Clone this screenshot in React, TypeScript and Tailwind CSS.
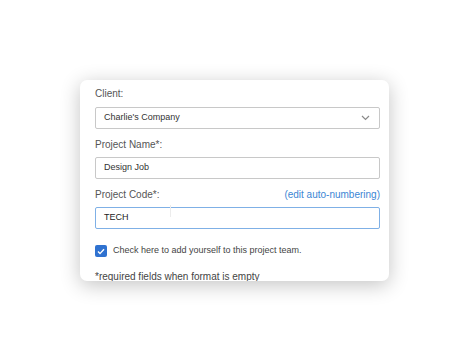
import React from "react";

const Label = ({ children }: { children: React.ReactNode }) => (
	<span className="block h-[12px] text-[10px] leading-[12px] text-[#555]">{children}</span>
);

const App = () => {
	return (
		<div className="h-[362px] w-[469px] bg-white pl-[80px] pt-[80px] font-['Liberation_Sans',Arial,sans-serif]">
			<div className="h-[201px] w-[309px] overflow-hidden rounded-[7px] bg-white pl-[15px] pr-[9px] pt-[8px] shadow-[0_4px_20px_rgba(0,0,0,0.24)]">
				{/* client */}
				<Label>Client:</Label>
				<div className="mt-[7px] flex h-[22px] items-center justify-between rounded-[2px] border border-[#c8c8c8] pl-[8px] pr-[9px] text-[9px] text-[#333]">
					<span>Charlie's Company</span>
					<svg width="9" height="6" viewBox="0 0 9 6" fill="none">
						<path d="M1 1l3.5 3.5L8 1" stroke="#8a8a8a" strokeWidth="1.2" />
					</svg>
				</div>

				{/* project name */}
				<div className="mt-[10px]">
					<Label>Project Name*:</Label>
				</div>
				<div className="mt-[6px] flex h-[22px] items-center rounded-[2px] border border-[#c8c8c8] pl-[8px] text-[9px] text-[#333]">
					Design Job
				</div>

				{/* project code */}
				<div className="mt-[10px] flex items-center justify-between">
					<Label>Project Code*:</Label>
					<span className="text-[10px] leading-[12px] text-[#3b86d4]">(edit auto-numbering)</span>
				</div>
				<div className="relative mt-[6px] flex h-[22px] items-center rounded-[2px] border border-[#7fb0e6] pl-[8px] text-[9px] text-[#222]">
					TECH
					<span className="absolute left-[74px] top-[-3px] h-[12px] w-[1px] bg-[#ececec]" />
				</div>

				{/* add yourself */}
				<div className="mt-[16px] flex h-[12px] items-center gap-[6px]">
					<span className="flex h-[12px] w-[12px] items-center justify-center rounded-[2px] bg-[#2f72d0]">
						<svg width="8" height="7" viewBox="0 0 8 7" fill="none">
							<path d="M1 3.6l2 2L7 1.2" stroke="white" strokeWidth="1.4" />
						</svg>
					</span>
					<span className="text-[9px] text-[#444]">Check here to add yourself to this project team.</span>
				</div>

				<div className="mt-[14px] text-[10px] leading-[12px] text-[#444]">
					*required fields when format is empty
				</div>
			</div>
		</div>
	);
};

export default App;
